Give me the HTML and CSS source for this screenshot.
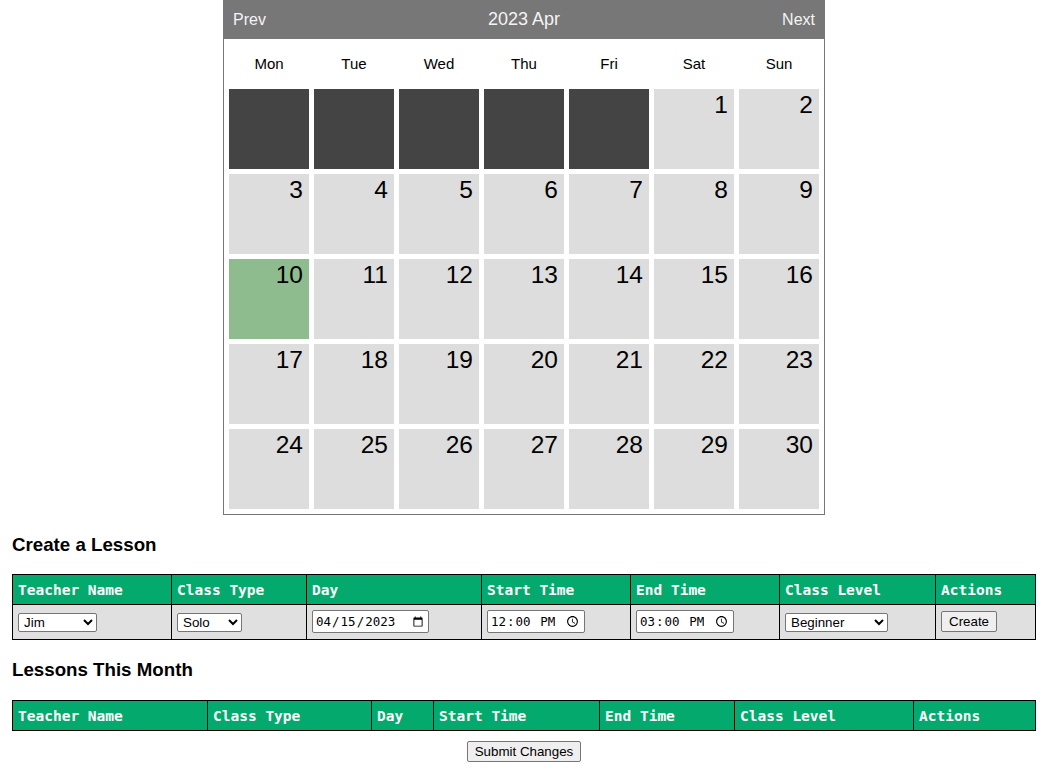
FILE: index.html
```html
<!DOCTYPE html>
<html>
<head>
<meta charset="utf-8">
<title>Lessons</title>
<link rel="stylesheet" href="styles.css">
</head>
<body>
<div class="calendar">
  <div class="cal-head">
    <span class="nav">Prev</span>
    <span class="title">2023 Apr</span>
    <span class="nav">Next</span>
  </div>
  <div class="weekdays">
    <div>Mon</div><div>Tue</div><div>Wed</div><div>Thu</div><div>Fri</div><div>Sat</div><div>Sun</div>
  </div>
  <div class="days">
    <div class="day empty"></div><div class="day empty"></div><div class="day empty"></div><div class="day empty"></div><div class="day empty"></div>
    <div class="day">1</div><div class="day">2</div>
    <div class="day">3</div><div class="day">4</div><div class="day">5</div><div class="day">6</div><div class="day">7</div><div class="day">8</div><div class="day">9</div>
    <div class="day today">10</div><div class="day">11</div><div class="day">12</div><div class="day">13</div><div class="day">14</div><div class="day">15</div><div class="day">16</div>
    <div class="day">17</div><div class="day">18</div><div class="day">19</div><div class="day">20</div><div class="day">21</div><div class="day">22</div><div class="day">23</div>
    <div class="day">24</div><div class="day">25</div><div class="day">26</div><div class="day">27</div><div class="day">28</div><div class="day">29</div><div class="day">30</div>
  </div>
</div>

<h3>Create a Lesson</h3>
<table class="grid">
  <colgroup>
    <col class="a1"><col class="a2"><col class="a3"><col class="a4"><col class="a5"><col class="a6"><col>
  </colgroup>
  <thead>
    <tr><th>Teacher Name</th><th>Class Type</th><th>Day</th><th>Start Time</th><th>End Time</th><th>Class Level</th><th>Actions</th></tr>
  </thead>
  <tbody>
    <tr>
      <td><select class="sel-teacher"><option>Jim</option><option>Sarah</option></select></td>
      <td><select class="sel-type"><option>Solo</option><option>Group</option></select></td>
      <td><input type="date" class="in-date" value="2023-04-15"></td>
      <td><input type="time" class="in-time" value="12:00"></td>
      <td><input type="time" class="in-time" value="15:00"></td>
      <td><select class="sel-level"><option>Beginner</option><option>Intermediate</option></select></td>
      <td><button class="btn">Create</button></td>
    </tr>
  </tbody>
</table>

<h3>Lessons This Month</h3>
<table class="grid">
  <colgroup>
    <col class="b1"><col class="b2"><col class="b3"><col class="b4"><col class="b5"><col class="b6"><col>
  </colgroup>
  <thead>
    <tr><th>Teacher Name</th><th>Class Type</th><th>Day</th><th>Start Time</th><th>End Time</th><th>Class Level</th><th>Actions</th></tr>
  </thead>
  <tbody></tbody>
</table>
<div class="submit-row"><button class="btn">Submit Changes</button></div>
</body>
</html>
```
FILE: styles.css
```css
body {
  margin: 0 11px 0 12px;
  font-family: "Liberation Sans", Arial, sans-serif;
  color: #000;
  background: #fff;
}

.calendar {
  width: 600px;
  margin: 0 auto;
  border: 1px solid #777;
  border-top: none;
  padding-bottom: 5px;
}

.cal-head {
  background: #777;
  height: 39px;
  display: flex;
  align-items: center;
  justify-content: space-between;
  padding: 0 10px;
  color: #f4f4f4;
  margin: 0 -1px;
}
.cal-head .nav { font-size: 16px; }
.cal-head .title { font-size: 18px; }

.weekdays {
  display: grid;
  grid-template-columns: repeat(7, 80px);
  column-gap: 5px;
  padding: 3px 5px 0;
  height: 45px;
  align-items: center;
  font-size: 15px;
  text-align: center;
  box-sizing: border-box;
}

.days {
  display: grid;
  grid-template-columns: repeat(7, 80px);
  grid-auto-rows: 80px;
  gap: 5px;
  padding: 5px 5px 0;
}

.day {
  background: #ddd;
  font-size: 24.5px;
  text-align: right;
  padding: 2px 6px 0 0;
  box-sizing: border-box;
}
.day.empty { background: #444; }
.day.today { background: #8fbc8f; }

h3 {
  font-size: 18.72px;
  margin: 18.72px 0;
  line-height: normal;
}

.grid {
  width: 100%;
  table-layout: fixed;
  border-collapse: collapse;
}
.grid th {
  background: #04aa6d;
  color: #fff;
  font-family: "DejaVu Sans Mono", "Liberation Mono", monospace;
  font-weight: bold;
  font-size: 14.5px;
  text-align: left;
  padding: 7px 5px 6px;
  border: 1px solid #000;
  line-height: 16px;
}
.grid td {
  background: #e0e0e0;
  border: 1px solid #000;
  padding: 5px 5px 6px;
  line-height: normal;
}

.a1 { width: 159px; } .a2 { width: 135px; } .a3 { width: 175px; } .a4 { width: 149px; }
.a5 { width: 149px; } .a6 { width: 156px; }
.b1 { width: 195px; } .b2 { width: 164px; } .b3 { width: 62px; } .b4 { width: 166px; }
.b5 { width: 135px; } .b6 { width: 179px; }

select, button {
  font-family: "Liberation Sans", Arial, sans-serif;
  font-size: 13.33px;
}
select {
  height: 19px;
  padding: 0 0 0 1px;
  border: 1px solid #767676;
  border-radius: 2px;
  background: #fff;
  vertical-align: middle;
}
.sel-teacher { width: 79px; }
.sel-type { width: 65px; }
.sel-level { width: 103px; }

input[type="date"], input[type="time"] {
  font-family: "DejaVu Sans Mono", "Liberation Mono", monospace;
  font-size: 12.5px;
  height: 23px;
  box-sizing: border-box;
  border: 1px solid #767676;
  border-radius: 2px;
  padding: 1px 2px;
  vertical-align: middle;
  background: #fff;
}
.in-date { width: 117px; }
.in-time { width: 98px; }

.btn {
  padding: 1px 7px;
  border: 1px solid #767676;
  border-radius: 2px;
  background: #efefef;
  height: 21px;
  vertical-align: middle;
  color: #000;
}

.submit-row {
  text-align: center;
  margin-top: 10px;
}
```
